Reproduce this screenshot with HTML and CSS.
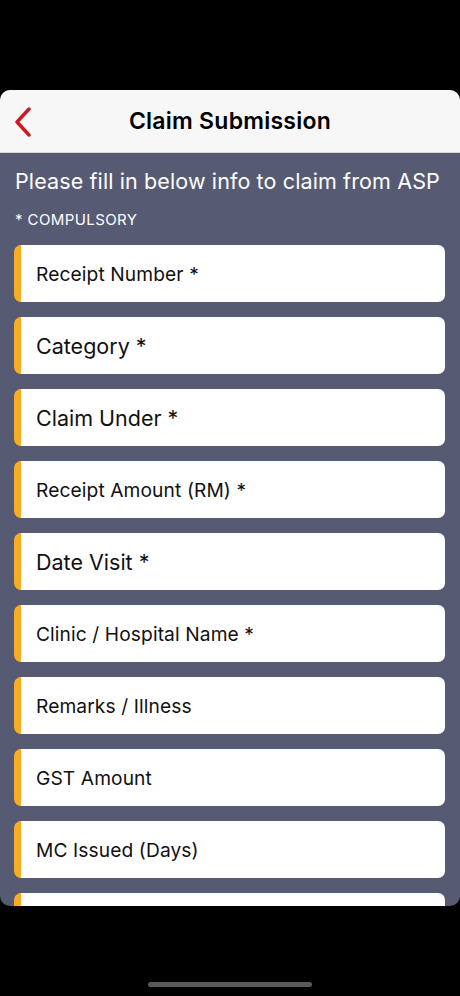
FILE: index.html
```html
<!DOCTYPE html>
<html lang="en">
<head>
<meta charset="utf-8">
<title>Claim Submission</title>
<link rel="stylesheet" href="styles.css">
</head>
<body>
<div class="device">
  <div class="top-gap"></div>
  <div class="screen">
    <header class="nav">
      <button class="back" aria-label="Back">
        <svg width="20" height="30" viewBox="0 0 20 30"><path d="M16 2 L4 15 L16 28" fill="none" stroke="#d0191f" stroke-width="3.4" stroke-linecap="round" stroke-linejoin="round"/></svg>
      </button>
      <h1 class="title">Claim Submission</h1>
    </header>
    <main class="content">
      <p class="intro">Please fill in below info to claim from ASP</p>
      <p class="note">* COMPULSORY</p>
      <div class="fields">
        <div class="field"><span class="label">Receipt Number *</span></div>
        <div class="field"><span class="label big">Category *</span></div>
        <div class="field"><span class="label big">Claim Under *</span></div>
        <div class="field"><span class="label">Receipt Amount (RM) *</span></div>
        <div class="field"><span class="label big">Date Visit *</span></div>
        <div class="field"><span class="label">Clinic / Hospital Name *</span></div>
        <div class="field"><span class="label">Remarks / Illness</span></div>
        <div class="field"><span class="label">GST Amount</span></div>
        <div class="field"><span class="label">MC Issued (Days)</span></div>
        <div class="field"><span class="label"></span></div>
      </div>
    </main>
  </div>
  <div class="home-area"><div class="home-bar"></div></div>
</div>
</body>
</html>
```
FILE: styles.css
```css
html, body {
  margin: 0;
  padding: 0;
  background: #000;
}
body {
  font-family: Inter, "Open Sans", "Liberation Sans", sans-serif;
  width: 460px;
  height: 996px;
  overflow: hidden;
}
.device {
  display: flex;
  flex-direction: column;
  height: 996px;
}
.top-gap {
  height: 90px;
  flex: none;
}
.screen {
  height: 816px;
  flex: none;
  border-radius: 10px;
  overflow: hidden;
  background: #565b73;
  display: flex;
  flex-direction: column;
}
.nav {
  height: 62px;
  flex: none;
  background: #f7f7f7;
  display: flex;
  align-items: center;
  justify-content: center;
  position: relative;
  border-bottom: 1px solid #d8d8dc;
}
.back {
  position: absolute;
  left: 11px;
  top: 16px;
  width: 24px;
  height: 32px;
  border: 0;
  padding: 0;
  background: none;
  display: flex;
  align-items: center;
  justify-content: center;
}
.title {
  margin: 0;
  font-size: 23px;
  font-weight: 600;
  color: #000;
  letter-spacing: 0.25px;
}
.content {
  padding: 14px 15px 0 14px;
  flex: 1;
  overflow: hidden;
}
.intro {
  margin: 0 0 0 1px;
  color: #fff;
  font-size: 21.5px;
  line-height: 28px;
  font-weight: 400;
  letter-spacing: 0.12px;
  white-space: nowrap;
}
.note {
  margin: 15px 0 15px 1px;
  color: #fff;
  font-size: 15px;
  line-height: 20px;
  letter-spacing: 0.4px;
}
.fields {
  display: flex;
  flex-direction: column;
  gap: 15px;
}
.field {
  height: 57px;
  flex: none;
  background: #fff;
  border-left: 7px solid #f9ac25;
  border-radius: 7px;
  display: flex;
  align-items: center;
  padding-left: 15px;
  box-sizing: border-box;
}
.label {
  font-size: 19.2px;
  color: #111;
  letter-spacing: 0.1px;
}
.label.big {
  font-size: 21.5px;
  letter-spacing: 0;
}
.home-area {
  flex: 1;
  display: flex;
  align-items: flex-end;
  justify-content: center;
  padding-bottom: 9px;
}
.home-bar {
  width: 164px;
  height: 5px;
  border-radius: 3px;
  background: #5a5a5a;
}
```
